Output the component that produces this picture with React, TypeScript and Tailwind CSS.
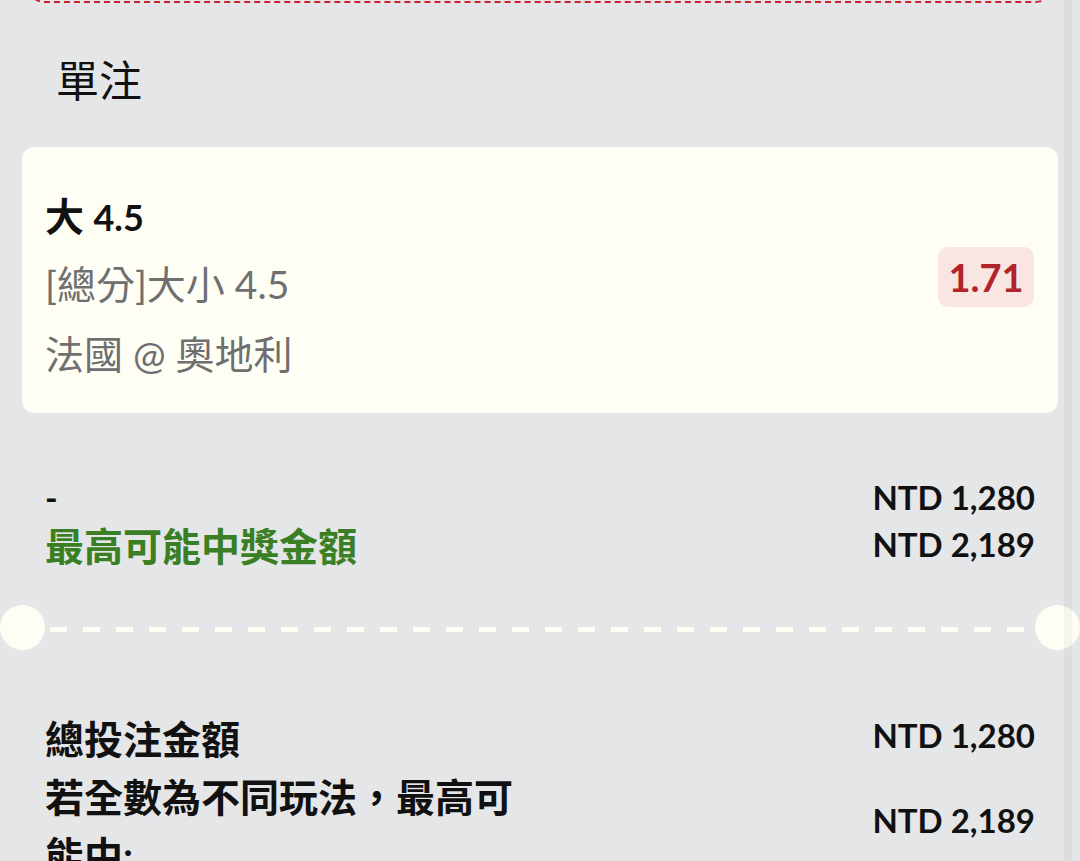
import React from "react";

const cream = "bg-[#fffef5]";

function AmountRow({ left, right }: { left: React.ReactNode; right: React.ReactNode }) {
  return (
    <div className="h-[47px] flex items-center justify-between">
      <div className="leading-none">{left}</div>
      <div className="text-[33px] leading-none font-bold text-[#111]">{right}</div>
    </div>
  );
}

function TicketDivider() {
  return (
    <div className="flex items-center">
      <div className={`w-[45px] h-[45px] rounded-full ${cream} shrink-0`} />
      <div className="flex-1 mx-[5px] h-[5px] mt-[4px] bg-[repeating-linear-gradient(to_right,#fffef5_0_17px,transparent_17px_33px)]" />
      <div className={`w-[45px] h-[45px] rounded-full ${cream} shrink-0`} />
    </div>
  );
}

export default function App() {
  return (
    <div className="relative h-[861px] overflow-hidden bg-[#e5e6e8] font-['Lato','Noto_Sans_CJK_TC',sans-serif] text-[#111]">
      {/* bottom edge of the previous dashed box */}
      <div className="mx-[28px] -mt-[37px] h-[40px] rounded-[16px] border-2 border-dashed border-[#cf1f2e]" />

      <h2 className="mt-[50px] pl-[56px] text-[43px] leading-[56px] font-normal">單注</h2>

      {/* selection card */}
      <div className={`mx-[22px] mt-[38px] h-[266px] rounded-[12px] ${cream} flex items-center justify-between pl-[23px] pr-[24px]`}>
        <div className="text-[39px] leading-[56px] mt-[10px]">
          <div className="font-bold">
            大 <span className="text-[36px]">4.5</span>
          </div>
          <div className="mt-[11px] text-[#6f6f6f]">[總分]大小 4.5</div>
          <div className="mt-[14px] text-[#6f6f6f]">法國 @ 奧地利</div>
        </div>
        <div className="-mt-[6px] w-[96px] h-[60px] rounded-[10px] bg-[#f9e6e2] flex items-center justify-center text-[38px] font-bold text-[#b1242a]">
          1.71
        </div>
      </div>

      {/* stake / potential win */}
      <div className="mt-[61px] pl-[45px] pr-[45px]">
        <AmountRow left={<span className="text-[34px] font-bold">-</span>} right="NTD 1,280" />
        <AmountRow
          left={<span className="block mt-[4px] text-[39px] font-bold text-[#3a7f24]">最高可能中獎金額</span>}
          right="NTD 2,189"
        />
      </div>

      <div className="mt-[37px]">
        <TicketDivider />
      </div>

      {/* totals */}
      <div className="mt-[60px] pl-[45px] pr-[45px]">
        <div className="flex items-center justify-between leading-[58px]">
          <div className="text-[39px] font-bold">總投注金額</div>
          <div className="text-[33px] font-bold -mt-[8px]">NTD 1,280</div>
        </div>
        <div className="flex items-center justify-between leading-[58px]">
          <div className="w-[480px] text-[39px] font-bold">若全數為不同玩法，最高可能中:</div>
          <div className="text-[33px] font-bold -mt-[13px]">NTD 2,189</div>
        </div>
      </div>

      {/* scrollbar track */}
      <div className="absolute top-0 bottom-0 right-[8px] w-[8px] bg-black/[0.035]" />
    </div>
  );
}
